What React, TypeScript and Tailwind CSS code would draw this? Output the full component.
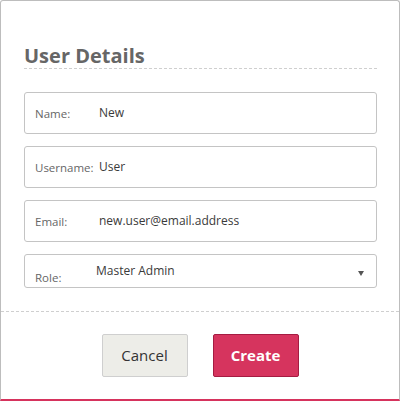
const FIELDS: { label: string; value: string }[] = [
  { label: 'Name:', value: 'New' },
  { label: 'Username:', value: 'User' },
  { label: 'Email:', value: 'new.user@email.address' },
];

export default function App() {
  return (
    <div
      className="w-[400px] h-[401px] bg-white border border-[#bdbdbd] border-b-2 border-b-[#d6335d] rounded-t-[3px] flex flex-col"
      style={{ fontFamily: '"Open Sans", "Liberation Sans", sans-serif' }}
    >
      <div className="pl-[23px] pr-[22px] pt-[43px]">
        <h2 className="text-[20px] font-bold text-[#666] leading-[24px] border-b border-dashed border-[#cfcfcf]">
          User Details
        </h2>

        <div className="mt-[23px] flex flex-col gap-[12px]">
          {FIELDS.map(f => (
            <div
              key={f.label}
              className="relative h-[42px] border border-[#c4c4c4] rounded-[3px]"
            >
              <span className="absolute left-[10px] top-[12px] text-[11.5px] text-[#666] leading-[18px]">{f.label}</span>
              <span className="absolute left-[74px] top-[11px] text-[12px] text-[#3a3a3a] leading-[18px]">{f.value}</span>
            </div>
          ))}

          {/* Role select */}
          <div className="relative h-[34px] border border-[#c4c4c4] rounded-[3px]">
            <span className="absolute left-[10px] top-[14px] text-[11.5px] text-[#666] leading-[18px]">Role:</span>
            <span className="absolute left-[71px] top-[7px] text-[12px] text-[#3a3a3a] leading-[18px]">Master Admin</span>
            <span className="absolute right-[12px] top-[16px] w-0 h-0 border-l-[3.5px] border-r-[3.5px] border-t-[5px] border-l-transparent border-r-transparent border-t-[#555]" />
          </div>
        </div>
      </div>

      <div className="mt-[23px] border-t border-dashed border-[#cfcfcf]" />

      <div className="flex justify-center gap-[25px] pt-[22px]">
        <button className="w-[86px] h-[43px] bg-[#edede8] border border-[#cfcfcf] rounded-[2px] text-[15px] text-[#333]">
          Cancel
        </button>
        <button className="w-[86px] h-[43px] bg-[#d6345e] border border-[#a51c42] rounded-[2px] text-[15px] font-bold text-white">
          Create
        </button>
      </div>
    </div>
  );
}
